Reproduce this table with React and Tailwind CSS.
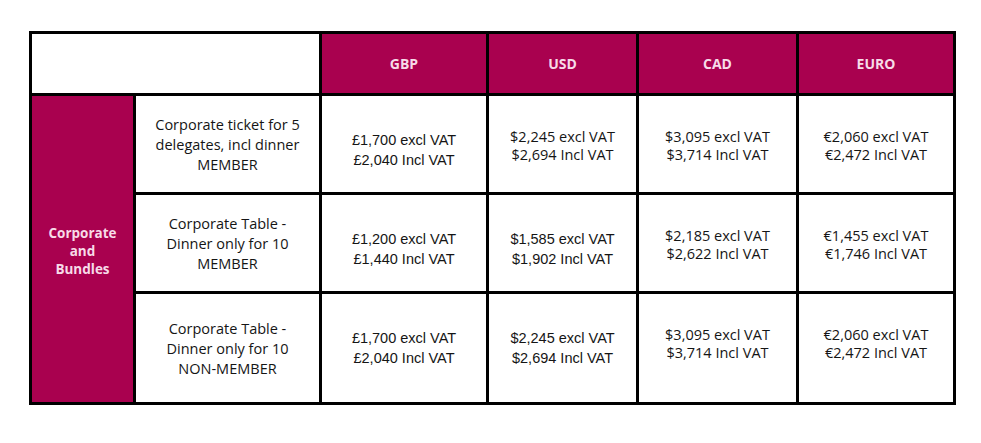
import React from 'react'

const open = "[font-family:'Open_Sans',sans-serif]";
const arial = "[font-family:'Liberation_Sans',Arial,sans-serif]";

// each price cell: lines, font, vertical nudge
const rows = [
    {
        desc: ['Corporate ticket for 5', 'delegates, incl dinner', 'MEMBER'],
        prices: [
            { lines: ['£1,700 excl VAT', '£2,040 Incl VAT'], arial: true, nudge: 'pt-[12px]' },
            { lines: ['$2,245 excl VAT', '$2,694 Incl VAT'], nudge: 'pt-[4px]' },
            { lines: ['$3,095 excl VAT', '$3,714 Incl VAT'], nudge: 'pt-[4px]' },
            { lines: ['€2,060 excl VAT', '€2,472 Incl VAT'], nudge: 'pt-[4px]' },
        ],
    },
    {
        desc: ['Corporate Table -', 'Dinner only for 10', 'MEMBER'],
        prices: [
            { lines: ['£1,200 excl VAT', '£1,440 Incl VAT'], arial: true, nudge: 'pt-[12px]' },
            { lines: ['$1,585 excl VAT', '$1,902 Incl VAT'], arial: true, nudge: 'pt-[12px]' },
            { lines: ['$2,185 excl VAT', '$2,622 Incl VAT'], nudge: 'pt-[4px]' },
            { lines: ['€1,455 excl VAT', '€1,746 Incl VAT'], nudge: 'pt-[4px]' },
        ],
    },
    {
        desc: ['Corporate Table -', 'Dinner only for 10', 'NON-MEMBER'],
        prices: [
            { lines: ['£1,700 excl VAT', '£2,040 Incl VAT'], arial: true, nudge: '' },
            { lines: ['$2,245 excl VAT', '$2,694 Incl VAT'], arial: true, nudge: '' },
            { lines: ['$3,095 excl VAT', '$3,714 Incl VAT'], nudge: 'pb-[8px]' },
            { lines: ['€2,060 excl VAT', '€2,472 Incl VAT'], nudge: 'pb-[8px]' },
        ],
    },
];

const currencies = ['GBP', 'USD', 'CAD', 'EURO'];

function App() {
    return (
        <div className="w-[981px] h-[443px] bg-white pt-[31px] pl-[29px]">
            <div className="grid w-fit bg-black p-[3px] gap-[3px] grid-cols-[101px_183px_164px_147px_157px_154px] grid-rows-[59px_96px_96px_108px]">
                {/* Header */}
                <div className="col-span-2 bg-white"></div>
                {currencies.map((c) => (
                    <div
                        key={c}
                        className={`bg-[#a9014f] flex items-center justify-center text-[14px] font-bold text-[#f7dbe8] ${open}`}
                    >
                        {c}
                    </div>
                ))}

                {/* Group label */}
                <div
                    className={`row-span-3 row-start-2 bg-[#a9014f] flex flex-col items-center justify-center pt-[3px] text-[13.5px] leading-[18px] font-bold text-[#f7dbe8] ${open}`}
                >
                    <span>Corporate</span>
                    <span>and</span>
                    <span>Bundles</span>
                </div>

                {rows.map((row, i) => (
                    <React.Fragment key={i}>
                        <div
                            className={`col-start-2 bg-white flex flex-col items-center justify-center pt-[2px] text-center text-[14.5px] leading-[20px] text-[#151515] ${open}`}
                        >
                            {row.desc.map((d) => (
                                <span key={d}>{d}</span>
                            ))}
                        </div>
                        {row.prices.map((p, j) => (
                            <div
                                key={j}
                                className={`bg-white flex flex-col items-center justify-center text-center text-[14.5px] text-[#151515] ${
                                    p.arial ? `${arial} leading-[20px]` : `${open} leading-[18px]`
                                } ${p.nudge}`}
                            >
                                {p.lines.map((l) => (
                                    <span key={l}>{l}</span>
                                ))}
                            </div>
                        ))}
                    </React.Fragment>
                ))}
            </div>
        </div>
    );
}

export default App;
